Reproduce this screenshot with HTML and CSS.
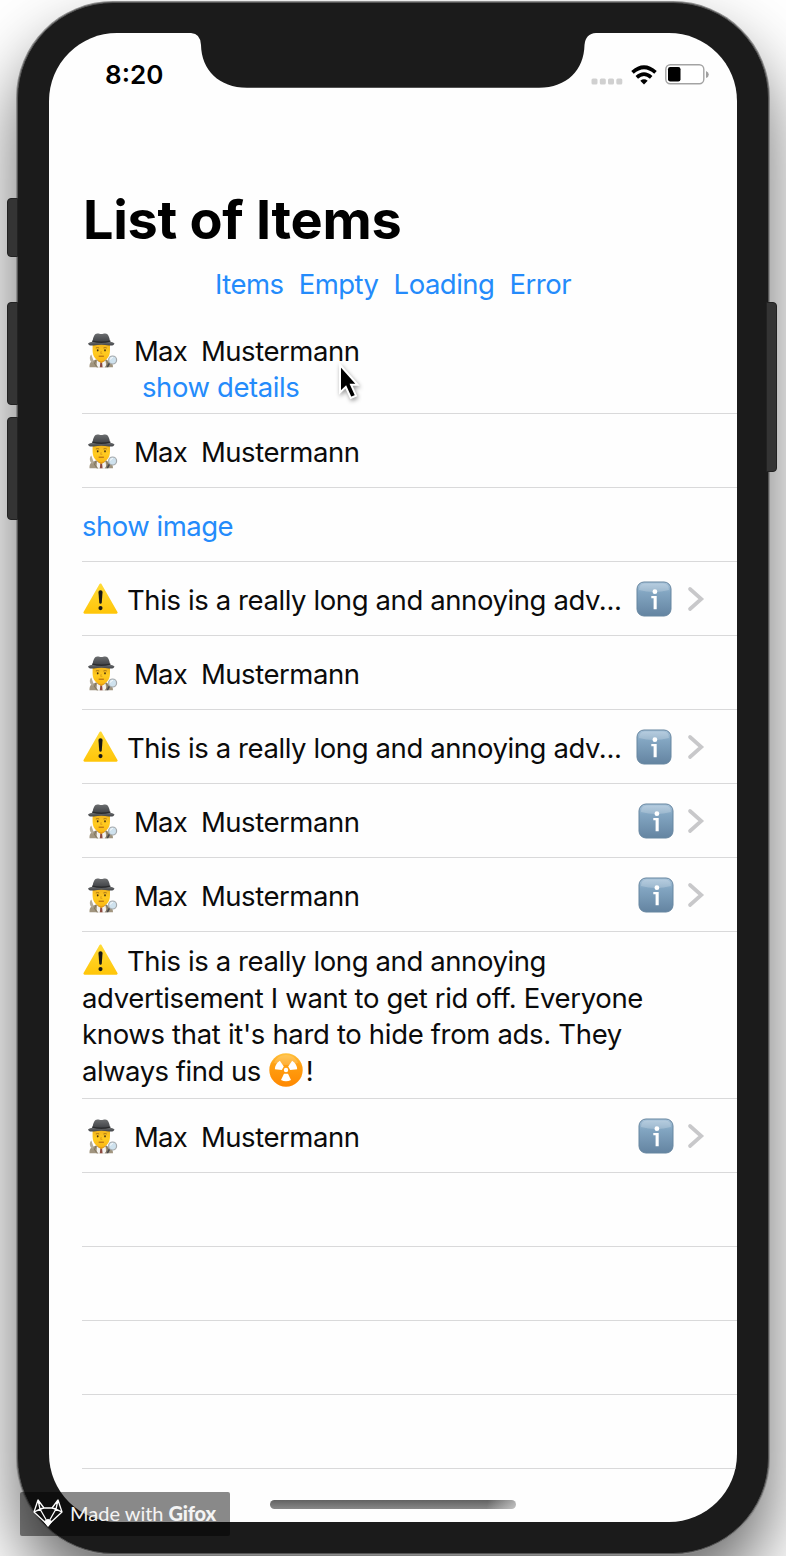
FILE: index.html
```html
<!DOCTYPE html>
<html lang="en">
<head>
<meta charset="utf-8">
<title>List of Items</title>
<link rel="stylesheet" href="styles.css">
</head>
<body>
<svg class="defs" width="0" height="0" aria-hidden="true">
  <defs>
    <linearGradient id="hatG" x1="0" y1="0" x2="0" y2="1"><stop offset="0" stop-color="#6c6e70"/><stop offset="1" stop-color="#404246"/></linearGradient>
    <linearGradient id="faceG" x1="0" y1="0" x2="0" y2="1"><stop offset="0" stop-color="#f2b21c"/><stop offset=".5" stop-color="#ffcb20"/><stop offset="1" stop-color="#fbb814"/></linearGradient>
    <linearGradient id="warnG" x1="0" y1="0" x2="0" y2="1"><stop offset="0" stop-color="#ffda35"/><stop offset="1" stop-color="#ffc60a"/></linearGradient>
    <linearGradient id="infoG" x1="0" y1="0" x2="0" y2="1"><stop offset="0" stop-color="#a9c4da"/><stop offset=".3" stop-color="#83a6c2"/><stop offset="1" stop-color="#6484a1"/></linearGradient>
    <linearGradient id="radG" x1="0" y1="0" x2="0" y2="1"><stop offset="0" stop-color="#ffc13d"/><stop offset=".35" stop-color="#ffa012"/><stop offset="1" stop-color="#ff8800"/></linearGradient>
    <symbol id="detective" viewBox="0 0 32 36">
      <path d="M2.500 35.300c0-4 1-6 4.500-7l3-1h9l3 2c3 1 4 3 4 6z" fill="#a1957f"/>
      <path d="M3.500 29c-1.200-3-.8-5 .8-6.500l2.200 6-1 2.500z" fill="#b3aa99"/>
      <path d="M10 28.500l4 2.500 4.500-2.500 1 6.800H9.500z" fill="#f3f2ef"/>
      <path d="M13.300 30.500h1.800l.5 4.800h-2.800z" fill="#8d4a3f"/>
      <path d="M9 28l-1.500 3.500 3 3.800M19 28l2 3.500-2.500 3.800" fill="none" stroke="#84775f" stroke-width="1.100"/>
      <path d="M10.800 25h7v4L14.300 31l-3.500-2z" fill="#e89d12"/>
      <path d="M5.600 12h17.400v6.500c0 6.500-4 10.500-8.700 10.500s-8.700-4-8.700-10.500z" fill="url(#faceG)"/>
      <path d="M8.800 16q2-.9 3.400 0M16.400 16q2-.9 3.400 0" fill="none" stroke="#a26f16" stroke-width=".9"/>
      <ellipse cx="10.700" cy="18.300" rx=".9" ry="1.100" fill="#46310f"/><ellipse cx="18" cy="18.300" rx=".9" ry="1.100" fill="#46310f"/>
      <path d="M14.200 19l-.5 2.300h1.600" fill="none" stroke="#d99a1b" stroke-width=".9"/>
      <path d="M11.700 24.200h5.200" fill="none" stroke="#a65e12" stroke-width="1"/>
      <path d="M5.500 10C6.200 4.500 7.600 1.500 10.300 1.500c1.800 0 2.500.5 4 .5s2.200-.5 4-.5c2.700 0 4.100 3 4.800 8.500z" fill="url(#hatG)"/>
      <path d="M5.200 8.600q9.100 1.800 18.200 0V12.200q-9.100-1.800-18.200 0z" fill="#2b2c2e"/>
      <path d="M1 11.400c1.500-1.200 2.700-1.300 4.300-1.600q9 2.600 18 0c1.600.3 2.800.5 4.200 1.600-.8 2.200-3 2.500-5.700 2q-7.500-1.500-15 0C4 13.900 1.800 13.600 1 11.400z" fill="url(#hatG)"/>
      <path d="M23.500 31l-2.300 4.300h-1.900l2.900-5.200z" fill="#48494b"/>
      <circle cx="25.600" cy="28" r="4" fill="#cfe2ee" stroke="#a5a9ac" stroke-width="1.200"/>
      <path d="M23.400 27.500q.8-2.200 2.400-2.200" fill="none" stroke="#fff" stroke-width="1"/>
    </symbol>
    <symbol id="warning" viewBox="0 0 34 30">
      <path d="M17 1.500L32.500 28.600H1.500z" fill="url(#warnG)" stroke="url(#warnG)" stroke-width="2.200" stroke-linejoin="round"/>
      <path d="M15 8.600q0-1.700 2-1.700t2 1.700l-.8 10.600q-.2 1-1.200 1t-1.200-1z" fill="#171717"/>
      <circle cx="17" cy="24.300" r="2" fill="#171717"/>
    </symbol>
    <symbol id="info" viewBox="0 0 36 36">
      <rect x="1" y="1" width="34" height="34" rx="7" fill="url(#infoG)" stroke="#6786a0" stroke-width="1"/>
      <path d="M3 9q0-6.500 6-6.500h18q6 0 6 6.500-15 4-30 0z" fill="#fff" opacity=".2"/>
      <circle cx="18.900" cy="10.700" r="2.400" fill="#fff"/>
      <path d="M15.300 15h5.400V28.300h-3.100V17.200h-2.300z" fill="#fff"/>
    </symbol>
    <symbol id="chevron" viewBox="0 0 18 26">
      <path d="M3 3l11.300 10L3 23" fill="none" stroke="#c8c8ca" stroke-width="3.700" stroke-linecap="round" stroke-linejoin="miter"/>
    </symbol>
    <symbol id="radiation" viewBox="0 0 34 34">
      <circle cx="17" cy="17" r="16.700" fill="url(#radG)"/>
      <path d="M5 10Q8 2 17 2t12 8Q17 14 5 10z" fill="#fff" opacity=".16"/>
      <circle cx="17" cy="17" r="2.200" fill="#fff"/>
      <g fill="#fff"><path d="M15 20.700h4l3 6.300q-5 2.700-10 0z"/><path d="M15 20.700h4l3 6.300q-5 2.700-10 0z" transform="rotate(120 17 17)"/><path d="M15 20.700h4l3 6.300q-5 2.700-10 0z" transform="rotate(240 17 17)"/></g>
    </symbol>
  </defs>
</svg>

<div class="stage">
  <i class="side-button mute"></i>
  <i class="side-button vol-up"></i>
  <i class="side-button vol-down"></i>
  <i class="side-button power"></i>
  <div class="phone">
    <main class="screen">
      <header class="status">
        <span class="time">8:20</span>
        <span class="indicators">
          <svg class="signal" width="32" height="7" viewBox="0 0 32 7" fill="#d0d0d0"><rect x=".5" y=".5" width="6" height="6" rx="1.500"/><rect x="8.800" y=".5" width="6" height="6" rx="1.500"/><rect x="17" y=".5" width="6" height="6" rx="1.500"/><rect x="25.300" y=".5" width="6" height="6" rx="1.500"/></svg>
          <svg class="wifi" width="26" height="20" viewBox="0 0 26 20" fill="none" stroke="#000" stroke-width="3.700"><path d="M1.500 7.300Q13-2.900 24.500 7.300M5.800 12.300Q13 5.900 20.200 12.300"/><path d="M13 19.500L9.300 15.700Q13 12.800 16.700 15.700z" fill="#000" stroke="none"/></svg>
          <svg class="battery" width="44" height="21" viewBox="0 0 44 21"><rect x=".8" y=".8" width="38" height="19" rx="4.500" fill="#fff" stroke="#a3a3a3" stroke-width="1.400"/><rect x="3" y="3" width="12.500" height="14.500" rx="2.200" fill="#000"/><path d="M41 7q2.800 1 2.800 3.500T41 14z" fill="#a0a0a0"/></svg>
        </span>
      </header>
      <h1 class="title">List of Items</h1>
      <nav class="tabs"><a>Items</a><a>Empty</a><a>Loading</a><a>Error</a></nav>
      <ul class="list">
        <li class="row expanded"><div class="person"><svg class="det"><use href="#detective"/></svg><span class="first">Max</span><span class="last">Mustermann</span></div><a class="details">show details</a></li>
        <li class="row"><div class="person"><svg class="det"><use href="#detective"/></svg><span class="first">Max</span><span class="last">Mustermann</span></div></li>
        <li class="row"><a class="show-image">show image</a></li>
        <li class="row sponsored"><svg class="warn"><use href="#warning"/></svg><span class="ad">This is a really long and annoying adv...</span><svg class="info"><use href="#info"/></svg><svg class="chev"><use href="#chevron"/></svg></li>
        <li class="row"><div class="person"><svg class="det"><use href="#detective"/></svg><span class="first">Max</span><span class="last">Mustermann</span></div></li>
        <li class="row sponsored"><svg class="warn"><use href="#warning"/></svg><span class="ad">This is a really long and annoying adv...</span><svg class="info"><use href="#info"/></svg><svg class="chev"><use href="#chevron"/></svg></li>
        <li class="row"><div class="person"><svg class="det"><use href="#detective"/></svg><span class="first">Max</span><span class="last">Mustermann</span></div><svg class="info"><use href="#info"/></svg><svg class="chev"><use href="#chevron"/></svg></li>
        <li class="row"><div class="person"><svg class="det"><use href="#detective"/></svg><span class="first">Max</span><span class="last">Mustermann</span></div><svg class="info"><use href="#info"/></svg><svg class="chev"><use href="#chevron"/></svg></li>
        <li class="row message">
          <div class="line"><svg class="warn"><use href="#warning"/></svg><span>This is a really long and annoying</span></div>
          <div class="line wide">advertisement I want to get rid off. Everyone</div>
          <div class="line wide">knows that it's hard to hide from ads. They</div>
          <div class="line"><span class="tight">always find us</span><svg class="rad"><use href="#radiation"/></svg><span>!</span></div>
        </li>
        <li class="row"><div class="person"><svg class="det"><use href="#detective"/></svg><span class="first">Max</span><span class="last">Mustermann</span></div><svg class="info"><use href="#info"/></svg><svg class="chev"><use href="#chevron"/></svg></li>
        <li class="row"></li><li class="row"></li><li class="row"></li><li class="row"></li>
      </ul>
      <div class="home-bar"></div>
    </main>
    <svg class="notch" width="412" height="58" viewBox="0 0 412 58"><path d="M0 0H412V3H409Q398.500 3.500 397.500 15C397 40 380 57.700 352 57.700H60C32 57.700 14.500 40 14 15Q13.500 3.500 4 3H0z" fill="#1b1b1b"/></svg>
  </div>
  <svg class="cursor" width="26" height="38" viewBox="0 0 26 38"><path d="M3 3v27.500l5.800-5.600 5 11 5.200-2.200-4.900-10.900h6.500z" fill="#000" stroke="#fff" stroke-width="2"/></svg>
  <div class="watermark">
    <svg width="30" height="28" viewBox="0 0 30 28" fill="none" stroke="#fff" stroke-width="1.300" stroke-linejoin="round"><path d="M5 1L1 13l14 13 14-13L25 1l-6 8h-8zM1 13l10-4M19 9l10 4M1 13l6-3 8 14 8-14 6 3M5 1l2 9M25 1l-2 9M7 10l4-1M23 10l-4-1"/><path d="M11.500 22.500l3.500-2 3.500 2L15 27z" fill="#fff"/></svg>
    <span class="made">Made with</span><b>Gifox</b>
  </div>
</div>
</body>
</html>
```
FILE: styles.css
```css
* { box-sizing: border-box; }
body { margin: 0; background: #fff; font-family: Inter, "Liberation Sans", sans-serif; font-size: 27.500px; letter-spacing: -.4px; color: #0b0b0b; }
svg { display: block; flex: none; }
.defs { position: absolute; }
.stage { position: relative; width: 786px; height: 1556px; overflow: hidden; padding: 2px 17px; }
.phone { position: relative; width: 752px; height: 1552px; padding: 30px 31px; border-radius: 96px; background: #1b1b1b; border: 1px solid #555; box-shadow: 0 0 0 1px #8b8b8b, 0 38px 70px rgba(0, 0, 0, .6); }
.screen { position: relative; width: 688px; height: 1489px; border-radius: 68px; background: #fefefe; overflow: hidden; }
.notch { position: absolute; left: 169px; top: 27px; }

.side-button { position: absolute; z-index: 1; width: 11px; background: #343434; border: 1px solid #222; border-radius: 4px 0 0 4px; left: 7px; }
.mute { top: 198px; height: 59px; }
.vol-up { top: 302px; height: 103px; }
.vol-down { top: 417px; height: 103px; }
.power { left: 766px; top: 302px; height: 170px; border-radius: 0 4px 4px 0; }

.status { display: flex; justify-content: space-between; height: 150px; padding: 26px 28px 0 56px; }
.time { font-size: 26px; line-height: 32px; font-weight: 600; letter-spacing: 0; color: #000; }
.indicators { display: flex; height: 31px; align-items: center; }
.signal { margin-top: 13px; }
.wifi { margin: 0 8px; }
.title { margin: 0; padding-left: 34px; font-size: 54px; line-height: 74px; font-weight: 700; letter-spacing: -.3px; color: #000; }
.tabs { display: flex; justify-content: center; gap: 15px; height: 66px; padding-top: 9px; line-height: 36px; letter-spacing: -.5px; }
a { color: #248bfb; }

.list { list-style: none; margin: 0; padding: 0 0 0 33px; }
.row { display: flex; align-items: center; height: 74px; padding: 3px 32px 0 0; border-bottom: 1px solid #d9d9da; line-height: 36px; white-space: nowrap; }
.expanded { height: 91px; flex-direction: column; align-items: flex-start; padding-top: 10px; }
.person { display: flex; align-items: center; flex: 1; }
.expanded .person { flex: none; }
.details { padding-left: 60px; }
.det { width: 32px; height: 36px; margin: -3px 15px 0 5px; }
.first { margin-right: 14px; letter-spacing: -.8px; }
.last { letter-spacing: -.45px; }
.show-image { letter-spacing: -.5px; }
.warn { width: 35px; height: 31px; margin: -3px 9px 0 1px; }
.ad { flex: 1; min-width: 0; }
.info { width: 36px; height: 36px; margin: -3px 13px 0 0; }
.sponsored .info { margin-right: 15px; }
.chev { width: 18px; height: 26px; margin-top: -3px; }
.message { display: block; height: 167px; padding: 11px 0 0; line-height: 36.500px; }
.line { display: flex; align-items: center; height: 36.500px; }
.wide { letter-spacing: -.33px; }
.tight { letter-spacing: -.5px; }
.rad { width: 34px; height: 34px; margin: -1px 3px 0 8px; }
.home-bar { position: absolute; left: 221px; bottom: 13px; width: 246px; height: 9px; border-radius: 5px; background: linear-gradient(100deg, transparent 88%, rgba(255, 255, 255, .5)), linear-gradient(#626262, #888); }

.cursor { position: absolute; left: 337px; top: 362px; filter: drop-shadow(1px 2px 2px rgba(0, 0, 0, .4)); }
.watermark { position: absolute; left: 20px; top: 1492px; width: 210px; height: 44px; display: flex; align-items: center; padding: 0 0 2px 13px; border-radius: 2px; background: rgba(0, 0, 0, .46); color: #f4f4f4; font: 20px/42px Lato, sans-serif; letter-spacing: 0; }
.watermark b { font-weight: 900; letter-spacing: -.2px; }
.made { margin: 0 5px 0 7px; white-space: nowrap; }
```
